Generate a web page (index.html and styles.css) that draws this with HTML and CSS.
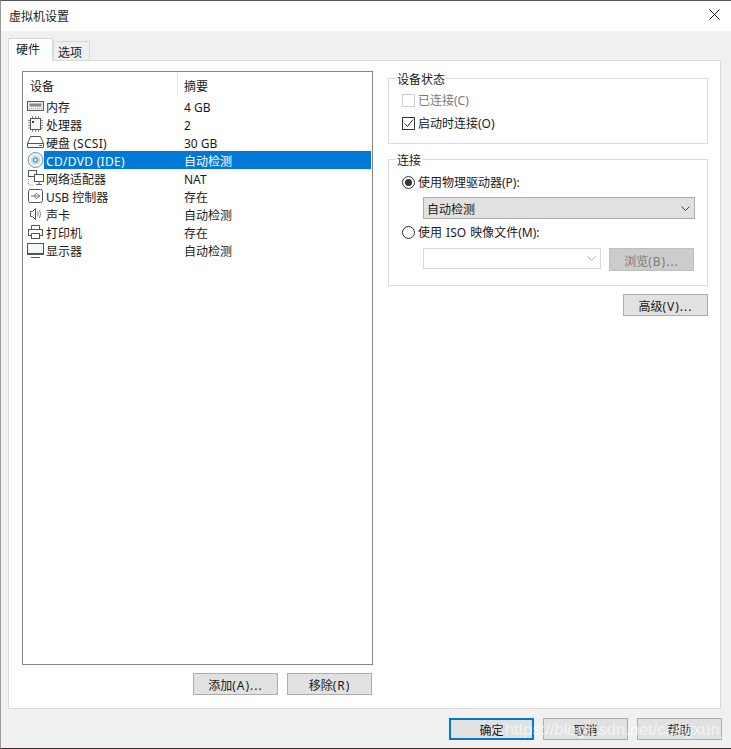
FILE: index.html
```html
<!DOCTYPE html>
<html lang="zh-CN">
<head>
    <meta charset="UTF-8">
    <title>虚拟机设置</title>
    <link rel="stylesheet" href="styles.css">
</head>
<body>
    <div class="window">
        <header class="title-bar">
            <span>虚拟机设置</span>
            <svg class="close-icon" width="11" height="11" viewBox="0 0 11 11"><path d="M.5.5l10 10M10.500.5l-10 10" stroke="#1a1a1a" fill="none"/></svg>
        </header>

        <div class="dialog-body">
            <div class="tabs">
                <div class="tab active">硬件</div>
                <div class="tab">选项</div>
            </div>

            <div class="tab-panel">
                <div class="left-col">
                    <div class="device-list">
                        <div class="list-head">
                            <div class="head-cell first">设备</div>
                            <div class="head-cell">摘要</div>
                        </div>

                        <div class="row">
                            <svg class="icon" viewBox="0 0 17 16"><rect x=".5" y="3.500" width="16" height="9" fill="#eee" stroke="#555"/><rect x="2.500" y="5.500" width="12" height="3" fill="#8a8a8a"/><path d="M2 10.500h13" stroke="#aaa" stroke-dasharray="1 1"/></svg>
                            <div class="cell name">内存</div>
                            <div class="cell">4 GB</div>
                        </div>
                        <div class="row">
                            <svg class="icon" viewBox="0 0 17 16"><rect x="3.500" y="2.500" width="10" height="11" fill="#f6f6f6" stroke="#555"/><path d="M1 4.500h2M1 7h2M1 9.500h2M1 12h2M14 4.500h2M14 7h2M14 9.500h2M14 12h2M5.500 0v2M8.500 0v2M11.500 0v2M5.500 14v2M8.500 14v2M11.500 14v2" stroke="#888"/><rect x="5" y="5" width="2" height="2" fill="#444"/></svg>
                            <div class="cell name">处理器</div>
                            <div class="cell">2</div>
                        </div>
                        <div class="row">
                            <svg class="icon" viewBox="0 0 17 16"><path d="M3.500 2.500h10l3 7v4h-16v-4z" fill="#fff" stroke="#555"/><path d="M.5 9.500h16" stroke="#555"/><path d="M12 11.500h3" stroke="#666"/></svg>
                            <div class="cell name">硬盘 <span class="wide">(SCSI)</span></div>
                            <div class="cell">30 GB</div>
                        </div>
                        <div class="row selected">
                            <svg class="icon" viewBox="0 0 17 16"><circle cx="8.500" cy="8" r="7.500" fill="#eef5fb" stroke="#6f93ad"/><circle cx="8.500" cy="8" r="4.500" fill="#bcd7ec"/><circle cx="8.500" cy="8" r="2" fill="#fff" stroke="#44729a"/></svg>
                            <div class="cell name"><span class="wide">CD/DVD (IDE)</span></div>
                            <div class="cell">自动检测</div>
                        </div>
                        <div class="row">
                            <svg class="icon" viewBox="0 0 17 16"><rect x="1.500" y=".5" width="8" height="6" fill="#fff" stroke="#555"/><rect x="7.500" y="4.500" width="9" height="7" fill="#fff" stroke="#555"/><path d="M12 11.500v3M9 14.500h6" stroke="#666"/><path d="M1.500 9v6h5" stroke="#888" stroke-dasharray="1 1" fill="none"/></svg>
                            <div class="cell name">网络适配器</div>
                            <div class="cell">NAT</div>
                        </div>
                        <div class="row">
                            <svg class="icon" viewBox="0 0 17 16"><rect x="1.500" y="1.500" width="14" height="13" rx="2" fill="#fff" stroke="#555"/><path d="M4 8h9M10 5.500l2.500 2.500-2.500 2M7 8l2-2.500h1M7 8l2 2.500h1" stroke="#777" fill="none"/></svg>
                            <div class="cell name">USB 控制器</div>
                            <div class="cell">存在</div>
                        </div>
                        <div class="row">
                            <svg class="icon" viewBox="0 0 17 16"><path d="M3.500 5.500h2l3-3v11l-3-3h-2z" fill="#fff" stroke="#555"/><path d="M10.500 5.500q1.500 2.500 0 5M12.500 4q2 4 0 8" stroke="#888" fill="none"/></svg>
                            <div class="cell name">声卡</div>
                            <div class="cell">自动检测</div>
                        </div>
                        <div class="row">
                            <svg class="icon" viewBox="0 0 17 16"><path d="M4.500 5.500v-4h8v4" fill="#fff" stroke="#555"/><rect x="1.500" y="5.500" width="14" height="6" fill="#fff" stroke="#555"/><rect x="4.500" y="9.500" width="8" height="5" fill="#fff" stroke="#555"/></svg>
                            <div class="cell name">打印机</div>
                            <div class="cell">存在</div>
                        </div>
                        <div class="row">
                            <svg class="icon" viewBox="0 0 17 16"><rect x=".5" y="1.500" width="16" height="11" fill="#f4f8fb" stroke="#555"/><path d="M1 12h15" stroke="#555" stroke-width="2"/><path d="M4 15.500h9" stroke="#555"/></svg>
                            <div class="cell name">显示器</div>
                            <div class="cell">自动检测</div>
                        </div>
                    </div>

                    <div class="button-row">
                        <button class="btn">添加<span class="wide-btn">(A)...</span></button>
                        <button class="btn">移除<span class="wide-btn">(R)</span></button>
                    </div>
                </div>

                <div class="right-col">
                    <fieldset class="group status-group">
                        <legend>设备状态</legend>
                        <div class="option disabled">
                            <span class="check"></span>
                            <span>已连接(C)</span>
                        </div>
                        <div class="option">
                            <span class="check">
                                <svg width="11" height="11" viewBox="0 0 11 11"><path d="M1.500 5.500l3 3 5.500-7" stroke="#333" fill="none"/></svg>
                            </span>
                            <span>启动时连接(O)</span>
                        </div>
                    </fieldset>

                    <fieldset class="group connect-group">
                        <legend>连接</legend>
                        <div class="option">
                            <span class="radio on"></span>
                            <span>使用物理驱动器(P):</span>
                        </div>
                        <div class="select">
                            <span class="select-text">自动检测</span>
                            <svg width="9" height="5" viewBox="0 0 9 5"><path d="M.5.500l4 4 4-4" stroke="#444" fill="none"/></svg>
                        </div>
                        <div class="option">
                            <span class="radio"></span>
                            <span>使用 ISO 映像文件(M):</span>
                        </div>
                        <div class="iso-row">
                            <div class="select empty">
                                <svg width="9" height="5" viewBox="0 0 9 5"><path d="M.5.500l4 4 4-4" stroke="#aaa" fill="none"/></svg>
                            </div>
                            <button class="btn browse">浏览<span class="wide-btn">(B)...</span></button>
                        </div>
                    </fieldset>

                    <button class="btn advanced">高级<span class="wide-btn">(V)...</span></button>
                </div>
            </div>

            <div class="dialog-buttons">
                <button class="btn primary">确定</button>
                <button class="btn">取消</button>
                <button class="btn">帮助</button>
            </div>
        </div>
        <div class="watermark">https://blog.csdn.net/cangxun_</div>
    </div>
</body>
</html>
```

FILE: styles.css
```css
html,
body {
    margin: 0;
    padding: 0;
    height: 749px;
    overflow: hidden;
}
body {
    font-family: "Noto Sans", "Noto Sans CJK SC", sans-serif;
    font-size: 12px;
    color: #1a1a1a;
    background: #f0f0f0;
}
.window {
    position: relative;
    height: 749px;
    box-sizing: border-box;
    display: flex;
    flex-direction: column;
    border-top: 1px solid #555;
    border-left: 1px solid #9a9a9a;
    border-bottom: 1px solid #3a2f2a;
}
.title-bar {
    height: 30px;
    flex: none;
    box-sizing: border-box;
    background: #fff;
    display: flex;
    align-items: center;
    justify-content: space-between;
    padding: 0 11px 1px 8px;
}
.close-icon {
    align-self: flex-start;
    margin-top: 8px;
}
.dialog-body {
    flex: 1;
    display: flex;
    flex-direction: column;
    padding: 7px 9px 0 7px;
}
.tabs {
    display: flex;
    align-items: flex-end;
    height: 22px;
    flex: none;
    position: relative;
    z-index: 1;
}
.tab {
    width: 37px;
    height: 19px;
    line-height: 22px;
    padding-left: 4px;
    box-sizing: border-box;
    background: #f0f0f0;
    border: 1px solid #d9d9d9;
    border-bottom: none;
}
.tab.active {
    width: 45px;
    height: 23px;
    line-height: 21px;
    padding-left: 7px;
    background: #fff;
    margin-bottom: -1px;
}
.tab-panel {
    width: 713px;
    height: 649px;
    flex: none;
    box-sizing: border-box;
    background: #fff;
    border: 1px solid #d9d9d9;
    display: flex;
    padding: 10px 0 12px 13px;
    gap: 15px;
}
.left-col {
    width: 351px;
    display: flex;
    flex-direction: column;
}
.device-list {
    height: 594px;
    box-sizing: border-box;
    border: 1px solid #828790;
    padding-right: 1px;
}
.list-head {
    display: grid;
    grid-template-columns: 154px 1fr;
    height: 25px;
}
.head-cell {
    padding-left: 6px;
    line-height: 29px;
    border-left: 1px solid #e5e5e5;
    height: 24px;
}
.head-cell.first {
    padding-left: 7px;
    border-left: none;
}
.row {
    display: grid;
    grid-template-columns: 21px 133px 1fr;
    height: 18px;
    align-items: center;
}
.row .cell {
    padding-left: 7px;
    height: 18px;
    line-height: 21px;
    white-space: nowrap;
}
.row .cell.name {
    padding-left: 2px;
}
.row.selected .cell {
    background: #0078d7;
    color: #fff;
}
.wide {
    letter-spacing: 0.3px;
}
.wide-btn {
    letter-spacing: 1px;
}
.icon {
    width: 17px;
    height: 16px;
    margin-left: 4px;
}
.button-row {
    display: flex;
    justify-content: flex-end;
    gap: 9px;
    margin-top: 8px;
    padding-right: 1px;
}
.btn {
    width: 85px;
    height: 22px;
    padding: 2px 0 0;
    box-sizing: border-box;
    font: inherit;
    color: #1a1a1a;
    background: #e1e1e1;
    border: 1px solid #adadad;
}
.right-col {
    width: 320px;
    display: flex;
    flex-direction: column;
}
.group {
    margin: 0;
    padding: 0 0 0 13px;
    border: 1px solid #dcdcdc;
    min-width: 0;
    box-sizing: border-box;
}
.group legend {
    padding: 0 1px;
    margin-left: -6px;
    line-height: 20px;
    height: 16px;
}
.status-group {
    height: 74px;
    margin-top: -1px;
}
.connect-group {
    height: 135px;
    margin-top: 7px;
}
.option {
    display: flex;
    align-items: center;
    gap: 3px;
    height: 20px;
    word-spacing: 1px;
}
.status-group .option:first-of-type {
    margin-top: 4px;
}
.status-group .option + .option {
    margin-top: 3px;
}
.connect-group .option:first-of-type {
    margin-top: 5px;
}
.option.disabled {
    color: #7a7a7a;
}
.check {
    width: 11px;
    height: 11px;
    border: 1px solid #333;
    background: #fff;
    display: block;
    flex: none;
}
.check svg {
    display: block;
}
.disabled .check {
    border-color: #cfcfcf;
}
.radio {
    width: 11px;
    height: 11px;
    border: 1px solid #333;
    border-radius: 50%;
    background: #fff;
    flex: none;
    position: relative;
}
.radio.on::after {
    content: "";
    position: absolute;
    left: 2px;
    top: 2px;
    width: 7px;
    height: 7px;
    border-radius: 50%;
    background: #333;
}
.select {
    width: 272px;
    height: 22px;
    box-sizing: border-box;
    margin: 5px 0 3px 21px;
    padding: 0 3px 0 3px;
    display: flex;
    align-items: center;
    justify-content: space-between;
    background: #e1e1e1;
    border: 1px solid #adadad;
}
.select-text {
    padding-top: 2px;
}
.select svg {
    margin-right: 1px;
}
.select.empty {
    width: 178px;
    height: 21px;
    margin: 0;
    background: #fff;
    border-color: #d9d9d9;
    justify-content: flex-end;
}
.iso-row {
    display: flex;
    align-items: flex-start;
    gap: 8px;
    margin: 6px 0 0 21px;
}
.btn.browse {
    height: 23px;
    background: #ccc;
    border-color: #bfbfbf;
    color: #7a7a7a;
}
.btn.advanced {
    align-self: flex-end;
    margin-top: 8px;
}
.btn.primary {
    padding-top: 1px;
    border: 2px solid #0078d7;
}
.dialog-buttons {
    display: flex;
    justify-content: flex-end;
    gap: 9px;
    margin-top: 9px;
}
.watermark {
    position: absolute;
    left: 504px;
    top: 719px;
    font-family: "Liberation Sans", sans-serif;
    font-size: 16.5px;
    color: rgba(255, 255, 255, 0.6);
    white-space: nowrap;
}
```
